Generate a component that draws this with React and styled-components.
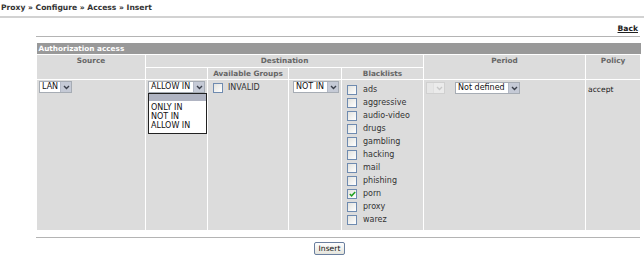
import React from 'react';
import styled, { createGlobalStyle } from 'styled-components';

const GlobalStyle = createGlobalStyle`
    body {
        margin: 0;
        background: #ffffff;
        font-family: 'DejaVu Sans', Verdana, sans-serif;
        color: #222222;
    }
`;

const Page = styled.div`
    width: 644px;
`;

const Crumb = styled.div`
    height: 16px;
    padding-left: 1px;
    font-size: 7.6px;
    font-weight: bold;
    line-height: 16px;
    color: #333333;
`;

const Rule = styled.div`
    height: ${p => p.thick ? 2 : 1}px;
    background: ${p => p.color || '#bbbbbb'};
`;

const Content = styled.div`
    margin: 0 4px 0 36px;
`;

const BackRow = styled.div`
    display: flex;
    justify-content: flex-end;
    height: 18px;
    padding-right: 2px;
    line-height: 22px;
`;

const BackLink = styled.a`
    font-size: 7.6px;
    font-weight: bold;
    color: #222222;
    text-decoration: underline;
`;

const Grid = styled.table`
    width: 604px;
    margin-top: 6px;
    border-collapse: collapse;
    table-layout: fixed;
`;

const Col = styled.col``;

const Title = styled.th`
    height: 11px;
    padding: 0 2px;
    background: #999999;
    color: #ffffff;
    font-size: 7.3px;
    font-weight: bold;
    text-align: left;
    line-height: 11px;
`;

const Head = styled.th`
    height: ${p => p.h || 12}px;
    padding: 0;
    border: 1px solid #ffffff;
    background: #dcdcdc;
    color: #666666;
    font-size: 7.3px;
    font-weight: bold;
    text-align: center;
    vertical-align: top;
    line-height: ${p => p.lh || 12}px;
`;

const Cell = styled.td`
    height: 144px;
    padding: ${p => p.pad || '1px 2px'};
    border: 1px solid #ffffff;
    background: #dcdcdc;
    font-size: 8px;
    vertical-align: top;
    position: relative;
`;

const Row = styled.div`
    display: flex;
    align-items: center;
    gap: ${p => p.gap || 6}px;
`;

const SelectBox = styled.div`
    display: inline-flex;
    align-items: center;
    justify-content: space-between;
    box-sizing: border-box;
    width: ${p => p.w}px;
    height: 12px;
    padding-left: 2px;
    border: 1px solid ${p => p.disabled ? '#d0d0d0' : '#a6acb4'};
    background: ${p => p.disabled ? '#e6e6e6' : '#ffffff'};
    color: #111111;
    font-size: 8px;
    line-height: 10px;
    white-space: nowrap;
    overflow: hidden;
`;

const Arrow = styled.span`
    display: flex;
    align-items: center;
    justify-content: center;
    width: 10px;
    height: 10px;
    flex: none;
    background: ${p => p.disabled ? '#ebebeb' : '#c5cad6'};
    border-left: 1px solid ${p => p.disabled ? '#e0e0e0' : '#b3b9c6'};
`;

const Menu = styled.div`
    position: absolute;
    top: 13px;
    left: 2px;
    width: 59px;
    box-sizing: border-box;
    border: 1px solid #222222;
    background: #ffffff;
    padding-bottom: 3px;
    z-index: 2;
`;

const MenuItem = styled.div`
    height: ${p => p.blank ? 7 : 9}px;
    padding-left: 2px;
    margin-bottom: ${p => p.blank ? 2 : 0}px;
    background: ${p => p.blank ? '#b0b4c2' : 'transparent'};
    color: #111111;
    font-size: 8px;
    line-height: 9px;
`;

const Box = styled.span`
    display: inline-flex;
    align-items: center;
    justify-content: center;
    box-sizing: border-box;
    width: 10px;
    height: 10px;
    border: 1px solid #6f8bb0;
    background: linear-gradient(135deg, #e2e2de, #ffffff);
    flex: none;
`;

const CheckList = styled.div`
    display: flex;
    flex-direction: column;
    gap: 3px;
    padding-top: 5px;
`;

const Label = styled.span`
    color: #333333;
    font-size: 8px;
    line-height: 10px;
`;

const Policy = styled.span`
    display: block;
    padding-top: 4px;
    font-size: 7.6px;
    color: #222222;
`;

const Footer = styled.div`
    display: flex;
    justify-content: center;
    padding: 4px 17px 0 0;
`;

const Button = styled.button`
    height: 13px;
    padding: 0 4px;
    border: 1px solid #6a7f9f;
    border-radius: 2px;
    background: linear-gradient(#ffffff, #e4e4dc);
    color: #111111;
    font-family: 'DejaVu Sans', Verdana, sans-serif;
    font-size: 7.6px;
    line-height: 10px;
`;

const Chevron = ({ disabled }) => (
    <svg width="7" height="5" viewBox="0 0 7 5">
        <path d="M1 1 L3.5 3.5 L6 1" fill="none" stroke={disabled ? '#c8c8c8' : '#3a3f4a'} strokeWidth="1.4" />
    </svg>
);

const Select = ({ w, value, disabled }) => (
    <SelectBox w={w} disabled={disabled}>
        <span>{value}</span>
        <Arrow disabled={disabled}><Chevron disabled={disabled} /></Arrow>
    </SelectBox>
);

const Check = ({ checked }) => (
    <Box>
        {checked &&
            <svg width="7" height="6" viewBox="0 0 7 6">
                <path d="M0.8 3 L2.6 4.8 L6.2 1" fill="none" stroke="#21a121" strokeWidth="1.5" />
            </svg>}
    </Box>
);

const blacklists = ['ads', 'aggressive', 'audio-video', 'drugs', 'gambling', 'hacking', 'mail', 'phishing', 'porn', 'proxy', 'warez'];
const modes = ['ONLY IN', 'NOT IN', 'ALLOW IN'];

const App = () => {
    return (
        <Page>
            <GlobalStyle />
            <Crumb>Proxy » Configure » Access » Insert</Crumb>
            <Rule thick color="#d2d2d2" />
            <Content>
                <BackRow>
                    <BackLink href="#">Back</BackLink>
                </BackRow>
                <Rule color="#b4b4b4" />
                <Grid>
                    <colgroup>
                        <Col style={{ width: 109 }} />
                        <Col style={{ width: 62 }} />
                        <Col style={{ width: 81 }} />
                        <Col style={{ width: 53 }} />
                        <Col style={{ width: 82 }} />
                        <Col style={{ width: 162 }} />
                        <Col style={{ width: 55 }} />
                    </colgroup>
                    <tbody>
                        <tr>
                            <Title colSpan={7}>Authorization access</Title>
                        </tr>
                        <tr>
                            <Head rowSpan={2} h={24}>Source</Head>
                            <Head colSpan={4} h={12}>Destination</Head>
                            <Head rowSpan={2} h={24}>Period</Head>
                            <Head rowSpan={2} h={24}>Policy</Head>
                        </tr>
                        <tr>
                            <Head h={10} lh={11}></Head>
                            <Head h={10} lh={11}>Available Groups</Head>
                            <Head h={10} lh={11}></Head>
                            <Head h={10} lh={11}>Blacklists</Head>
                        </tr>
                        <tr>
                            <Cell>
                                <Select w={33} value="LAN" />
                            </Cell>
                            <Cell>
                                <Select w={57} value="ALLOW IN" />
                                <Menu>
                                    <MenuItem blank />
                                    {modes.map(m => <MenuItem key={m}>{m}</MenuItem>)}
                                </Menu>
                            </Cell>
                            <Cell pad="3px 5px">
                                <Row gap={5}>
                                    <Check />
                                    <Label>INVALID</Label>
                                </Row>
                            </Cell>
                            <Cell pad="1px 3px 1px 4px">
                                <Select w={46} value="NOT IN" />
                            </Cell>
                            <Cell pad="0 5px">
                                <CheckList>
                                    {blacklists.map(b => (
                                        <Row key={b} gap={6}>
                                            <Check checked={b === 'porn'} />
                                            <Label>{b}</Label>
                                        </Row>
                                    ))}
                                </CheckList>
                            </Cell>
                            <Cell pad="2px 2px">
                                <Row gap={10}>
                                    <Select w={19} value="" disabled />
                                    <Select w={65} value="Not defined" />
                                </Row>
                            </Cell>
                            <Cell>
                                <Policy>accept</Policy>
                            </Cell>
                        </tr>
                    </tbody>
                </Grid>
                <Rule color="#b4b4b4" style={{ marginTop: 6 }} />
                <Footer>
                    <Button>Insert</Button>
                </Footer>
            </Content>
        </Page>
    );
};

export default App;
